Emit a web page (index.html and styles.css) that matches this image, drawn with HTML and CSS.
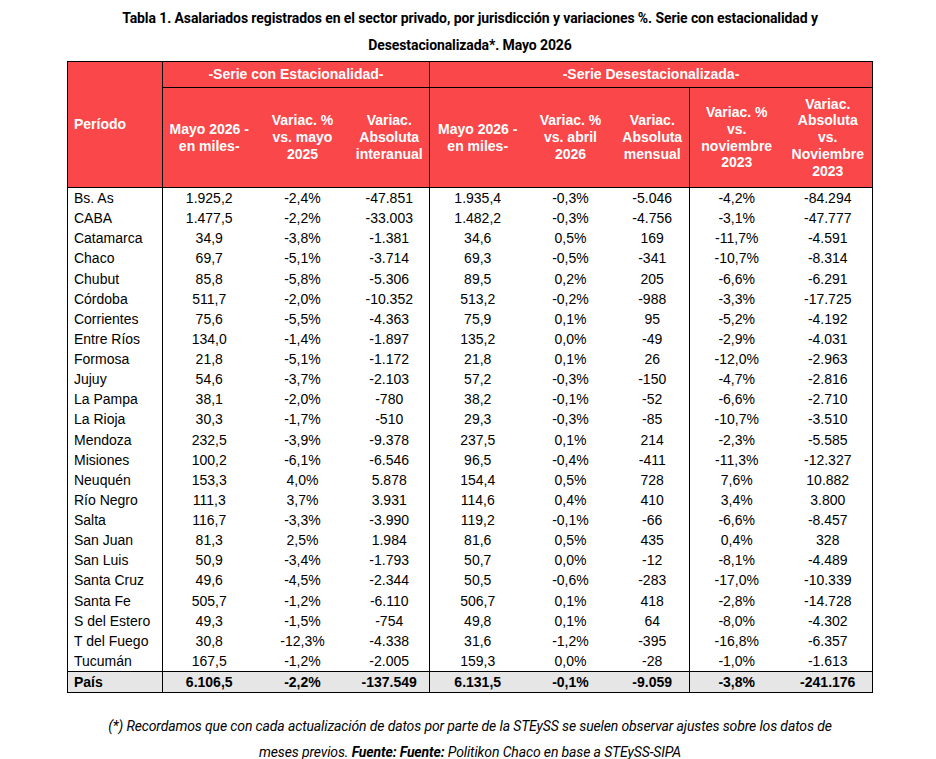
FILE: index.html
```html
<!DOCTYPE html>
<html lang="es">
<head>
    <meta charset="UTF-8">
    <meta name="viewport" content="width=device-width, initial-scale=1.0">
    <title>Asalariados registrados - Mayo 2026</title>
    <link rel="stylesheet" href="styles.css">
</head>
<body>

    <div class="sheet">
        <h1 class="title">
            Tabla 1. Asalariados registrados en el sector privado, por jurisdicción y variaciones %. Serie con estacionalidad y<br>
            Desestacionalizada*. Mayo 2026
        </h1>

        <table class="data">
            <colgroup>
                <col style="width:95px">
                <col style="width:93px">
                <col style="width:94px">
                <col style="width:80px">
                <col style="width:96px">
                <col style="width:90px">
                <col style="width:74px">
                <col style="width:94px">
                <col style="width:89px">
            </colgroup>
            <thead>
                <tr class="group-row">
                    <th rowspan="2" class="period">Período</th>
                    <th colspan="3">-Serie con Estacionalidad-</th>
                    <th colspan="5">-Serie Desestacionalizada-</th>
                </tr>
                <tr class="col-row">
                    <th>Mayo 2026 -<br>en miles-</th>
                    <th class="open">Variac. %<br>vs. mayo<br>2025</th>
                    <th class="open">Variac.<br>Absoluta<br>interanual</th>
                    <th>Mayo 2026 -<br>en miles-</th>
                    <th class="open">Variac. %<br>vs. abril<br>2026</th>
                    <th class="open">Variac.<br>Absoluta<br>mensual</th>
                    <th>Variac. %<br>vs.<br>noviembre<br>2023</th>
                    <th class="open">Variac.<br>Absoluta<br>vs.<br>Noviembre<br>2023</th>
                </tr>
            </thead>
            <tbody>
                <tr><td>Bs. As</td><td class="sep">1.925,2</td><td>-2,4%</td><td>-47.851</td><td class="sep">1.935,4</td><td>-0,3%</td><td>-5.046</td><td class="sep">-4,2%</td><td>-84.294</td></tr>
                <tr><td>CABA</td><td class="sep">1.477,5</td><td>-2,2%</td><td>-33.003</td><td class="sep">1.482,2</td><td>-0,3%</td><td>-4.756</td><td class="sep">-3,1%</td><td>-47.777</td></tr>
                <tr><td>Catamarca</td><td class="sep">34,9</td><td>-3,8%</td><td>-1.381</td><td class="sep">34,6</td><td>0,5%</td><td>169</td><td class="sep">-11,7%</td><td>-4.591</td></tr>
                <tr><td>Chaco</td><td class="sep">69,7</td><td>-5,1%</td><td>-3.714</td><td class="sep">69,3</td><td>-0,5%</td><td>-341</td><td class="sep">-10,7%</td><td>-8.314</td></tr>
                <tr><td>Chubut</td><td class="sep">85,8</td><td>-5,8%</td><td>-5.306</td><td class="sep">89,5</td><td>0,2%</td><td>205</td><td class="sep">-6,6%</td><td>-6.291</td></tr>
                <tr><td>Córdoba</td><td class="sep">511,7</td><td>-2,0%</td><td>-10.352</td><td class="sep">513,2</td><td>-0,2%</td><td>-988</td><td class="sep">-3,3%</td><td>-17.725</td></tr>
                <tr><td>Corrientes</td><td class="sep">75,6</td><td>-5,5%</td><td>-4.363</td><td class="sep">75,9</td><td>0,1%</td><td>95</td><td class="sep">-5,2%</td><td>-4.192</td></tr>
                <tr><td>Entre Ríos</td><td class="sep">134,0</td><td>-1,4%</td><td>-1.897</td><td class="sep">135,2</td><td>0,0%</td><td>-49</td><td class="sep">-2,9%</td><td>-4.031</td></tr>
                <tr><td>Formosa</td><td class="sep">21,8</td><td>-5,1%</td><td>-1.172</td><td class="sep">21,8</td><td>0,1%</td><td>26</td><td class="sep">-12,0%</td><td>-2.963</td></tr>
                <tr><td>Jujuy</td><td class="sep">54,6</td><td>-3,7%</td><td>-2.103</td><td class="sep">57,2</td><td>-0,3%</td><td>-150</td><td class="sep">-4,7%</td><td>-2.816</td></tr>
                <tr><td>La Pampa</td><td class="sep">38,1</td><td>-2,0%</td><td>-780</td><td class="sep">38,2</td><td>-0,1%</td><td>-52</td><td class="sep">-6,6%</td><td>-2.710</td></tr>
                <tr><td>La Rioja</td><td class="sep">30,3</td><td>-1,7%</td><td>-510</td><td class="sep">29,3</td><td>-0,3%</td><td>-85</td><td class="sep">-10,7%</td><td>-3.510</td></tr>
                <tr><td>Mendoza</td><td class="sep">232,5</td><td>-3,9%</td><td>-9.378</td><td class="sep">237,5</td><td>0,1%</td><td>214</td><td class="sep">-2,3%</td><td>-5.585</td></tr>
                <tr><td>Misiones</td><td class="sep">100,2</td><td>-6,1%</td><td>-6.546</td><td class="sep">96,5</td><td>-0,4%</td><td>-411</td><td class="sep">-11,3%</td><td>-12.327</td></tr>
                <tr><td>Neuquén</td><td class="sep">153,3</td><td>4,0%</td><td>5.878</td><td class="sep">154,4</td><td>0,5%</td><td>728</td><td class="sep">7,6%</td><td>10.882</td></tr>
                <tr><td>Río Negro</td><td class="sep">111,3</td><td>3,7%</td><td>3.931</td><td class="sep">114,6</td><td>0,4%</td><td>410</td><td class="sep">3,4%</td><td>3.800</td></tr>
                <tr><td>Salta</td><td class="sep">116,7</td><td>-3,3%</td><td>-3.990</td><td class="sep">119,2</td><td>-0,1%</td><td>-66</td><td class="sep">-6,6%</td><td>-8.457</td></tr>
                <tr><td>San Juan</td><td class="sep">81,3</td><td>2,5%</td><td>1.984</td><td class="sep">81,6</td><td>0,5%</td><td>435</td><td class="sep">0,4%</td><td>328</td></tr>
                <tr><td>San Luis</td><td class="sep">50,9</td><td>-3,4%</td><td>-1.793</td><td class="sep">50,7</td><td>0,0%</td><td>-12</td><td class="sep">-8,1%</td><td>-4.489</td></tr>
                <tr><td>Santa Cruz</td><td class="sep">49,6</td><td>-4,5%</td><td>-2.344</td><td class="sep">50,5</td><td>-0,6%</td><td>-283</td><td class="sep">-17,0%</td><td>-10.339</td></tr>
                <tr><td>Santa Fe</td><td class="sep">505,7</td><td>-1,2%</td><td>-6.110</td><td class="sep">506,7</td><td>0,1%</td><td>418</td><td class="sep">-2,8%</td><td>-14.728</td></tr>
                <tr><td>S del Estero</td><td class="sep">49,3</td><td>-1,5%</td><td>-754</td><td class="sep">49,8</td><td>0,1%</td><td>64</td><td class="sep">-8,0%</td><td>-4.302</td></tr>
                <tr><td>T del Fuego</td><td class="sep">30,8</td><td>-12,3%</td><td>-4.338</td><td class="sep">31,6</td><td>-1,2%</td><td>-395</td><td class="sep">-16,8%</td><td>-6.357</td></tr>
                <tr><td>Tucumán</td><td class="sep">167,5</td><td>-1,2%</td><td>-2.005</td><td class="sep">159,3</td><td>0,0%</td><td>-28</td><td class="sep">-1,0%</td><td>-1.613</td></tr>
            </tbody>
            <tfoot>
                <tr class="total"><td>País</td><td class="sep">6.106,5</td><td>-2,2%</td><td>-137.549</td><td class="sep">6.131,5</td><td>-0,1%</td><td>-9.059</td><td class="sep">-3,8%</td><td>-241.176</td></tr>
            </tfoot>
        </table>

        <!-- Nota al pie -->
        <p class="note">
            (*) Recordamos que con cada actualización de datos por parte de la STEySS se suelen observar ajustes sobre los datos de<br>
            meses previos. <b>Fuente: Fuente:</b> Politikon Chaco en base a STEySS-SIPA
        </p>
    </div>

</body>
</html>
```

FILE: styles.css
```css
body {
    margin: 0;
    background-color: #fff;
    color: #000;
    font-family: "Liberation Sans", Arial, sans-serif;
}
.sheet {
    width: 806px;
    margin-left: 67px;
    display: flex;
    flex-direction: column;
    align-items: center;
}
.title {
    margin: 5px 0 2px;
    font-family: "Liberation Sans Narrow", "Roboto", sans-serif;
    font-size: 14px;
    font-weight: bold;
    letter-spacing: -0.1px;
    line-height: 27px;
    text-align: center;
    white-space: nowrap;
}
.data {
    width: 806px;
    table-layout: fixed;
    border-collapse: collapse;
    border: 1px solid #000;
    font-size: 14px;
}
.data th {
    background-color: #f9474a;
    color: #fff;
    font-weight: bold;
    line-height: 16.7px;
    padding: 0;
    border: 1px solid #000;
    text-align: center;
}
.group-row th {
    height: 25px;
}
.col-row th {
    height: 99px;
}
.col-row th.open {
    border-left-style: hidden;
}
.data th.period {
    text-align: left;
    padding-left: 6px;
}
.data td {
    height: 20.125px;
    padding: 0;
    line-height: 20px;
    text-align: center;
    white-space: nowrap;
}
.data td:first-child {
    text-align: left;
    padding-left: 6px;
}
.data td.sep {
    border-left: 1px solid #000;
}
.total td {
    height: 19px;
    background-color: #e6e6e6;
    font-weight: bold;
    border-top: 1px solid #000;
}
.note {
    margin: 20px 0 0;
    font-family: "Liberation Sans Narrow", "Roboto", sans-serif;
    font-size: 14px;
    font-style: italic;
    letter-spacing: -0.13px;
    line-height: 26px;
    text-align: center;
    white-space: nowrap;
}
```
